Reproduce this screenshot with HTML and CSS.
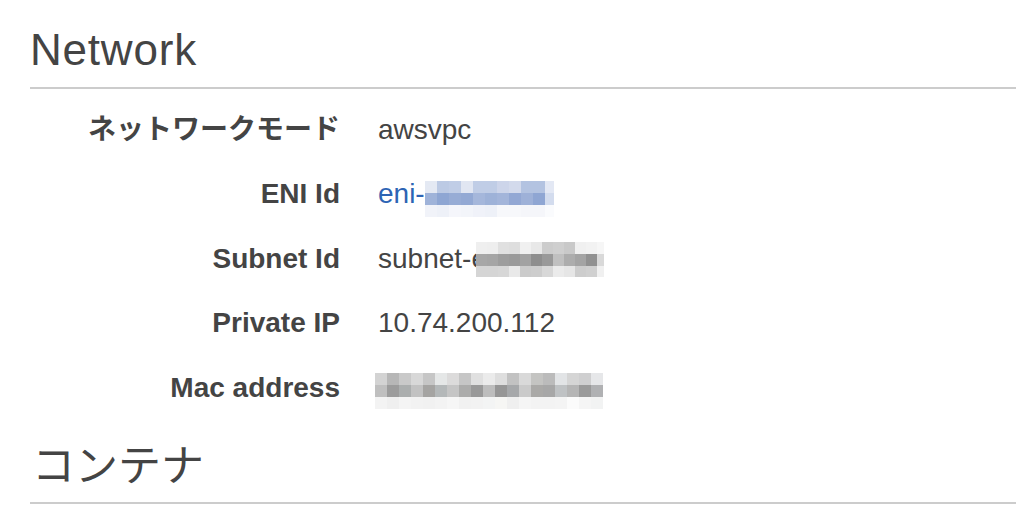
FILE: index.html
```html
<!DOCTYPE html>
<html lang="ja">
<head>
<meta charset="utf-8">
<title>Network</title>
<link rel="stylesheet" href="styles.css">
</head>
<body>
<section class="panel">
  <h2 class="section-title section-title-latin">Network</h2>
  <dl class="props">
    <div class="prop"><dt>ネットワークモード</dt><dd>awsvpc</dd></div>
    <div class="prop"><dt>ENI Id</dt><dd><a class="link" href="#">eni-</a><span class="mosaic mosaic-eni"><span class="mosaic-grid">
      <i style="background:#e4e9f3"></i><i style="background:#bccae4"></i><i style="background:#c0cde6"></i><i style="background:#e1e6f2"></i><i style="background:#c0cde6"></i><i style="background:#c0cde6"></i><i style="background:#cdd5ea"></i><i style="background:#d3daec"></i><i style="background:#b3c3e1"></i><i style="background:#b3c3e1"></i><i style="background:#e3e8f4"></i>
      <i style="background:#9fb3d9"></i><i style="background:#8ea6d3"></i><i style="background:#97acd5"></i><i style="background:#93a9d4"></i><i style="background:#a5b7db"></i><i style="background:#9eb2d8"></i><i style="background:#a3b5da"></i><i style="background:#93a8d4"></i><i style="background:#9eb1d8"></i><i style="background:#8fa6d3"></i><i style="background:#d3dcee"></i>
      <i style="background:#f1f3f9"></i><i style="background:#eef1f8"></i><i style="background:#f5f6fb"></i><i style="background:#f3f5fa"></i><i style="background:#f0f2f9"></i><i style="background:#eef1f8"></i><i style="background:#f7f8fb"></i><i style="background:#f7f8fb"></i><i style="background:#f5f6fa"></i><i style="background:#f5f6fa"></i><i style="background:#fafbfd"></i>
    </span></span></dd></div>
    <div class="prop"><dt>Subnet Id</dt><dd>subnet-e<span class="mosaic mosaic-subnet"><span class="mosaic-grid">
      <i style="background:#efefef"></i><i style="background:#eeeeee"></i><i style="background:#e0e0e0"></i><i style="background:#dedede"></i><i style="background:#f0f0f0"></i><i style="background:#e8e8e8"></i><i style="background:#cccccc"></i><i style="background:#cfcfcf"></i><i style="background:#c9c9c9"></i><i style="background:#f0f0f0"></i><i style="background:#f2f2f2"></i><i style="background:#f6f6f6"></i>
      <i style="background:#a7a7a7"></i><i style="background:#a5a5a5"></i><i style="background:#9d9d9d"></i><i style="background:#9a9a9a"></i><i style="background:#a2a2a2"></i><i style="background:#8e8e8e"></i><i style="background:#999999"></i><i style="background:#c0c0c0"></i><i style="background:#adadad"></i><i style="background:#a4a4a4"></i><i style="background:#919191"></i><i style="background:#d9d9d9"></i>
      <i style="background:#d5d5d5"></i><i style="background:#d5d5d5"></i><i style="background:#d7d7d7"></i><i style="background:#e9e9e9"></i><i style="background:#cbcbcb"></i><i style="background:#cdcdcd"></i><i style="background:#d8d8d8"></i><i style="background:#ebebeb"></i><i style="background:#e6e6e6"></i><i style="background:#cdcdcd"></i><i style="background:#d0d0d0"></i><i style="background:#f0f0f0"></i>
    </span></span></dd></div>
    <div class="prop"><dt>Private IP</dt><dd>10.74.200.112</dd></div>
    <div class="prop"><dt>Mac address</dt><dd><span class="mosaic mosaic-mac"><span class="mosaic-grid">
      <i style="background:#d3d3d3"></i><i style="background:#b7b7b7"></i><i style="background:#c9c9c9"></i><i style="background:#d8d8d8"></i><i style="background:#c6c6c6"></i><i style="background:#e5e7e7"></i><i style="background:#dcdbdb"></i><i style="background:#c6c6c6"></i><i style="background:#e0e0e0"></i><i style="background:#ebebeb"></i><i style="background:#dedede"></i><i style="background:#c2c2c2"></i><i style="background:#d9d9d9"></i><i style="background:#c4c4c2"></i><i style="background:#bbbbbb"></i><i style="background:#e2e4e6"></i><i style="background:#d5d5d5"></i><i style="background:#cfcfd0"></i><i style="background:#e6e7e9"></i>
      <i style="background:#bfbfbf"></i><i style="background:#9c9c9c"></i><i style="background:#abaeae"></i><i style="background:#c2c2c2"></i><i style="background:#a5a4a2"></i><i style="background:#b4b8b9"></i><i style="background:#c5c5c5"></i><i style="background:#acacab"></i><i style="background:#999999"></i><i style="background:#bdbdbd"></i><i style="background:#969696"></i><i style="background:#a6a8aa"></i><i style="background:#cacaca"></i><i style="background:#aaa9a7"></i><i style="background:#a7a7a7"></i><i style="background:#bfc2c4"></i><i style="background:#b5b5b5"></i><i style="background:#9a9a9a"></i><i style="background:#b0b1b3"></i>
      <i style="background:#f3f3f3"></i><i style="background:#efefef"></i><i style="background:#f4f4f4"></i><i style="background:#f2f2f2"></i><i style="background:#f1f1f1"></i><i style="background:#f3f3f3"></i><i style="background:#f6f6f6"></i><i style="background:#f1f1f1"></i><i style="background:#f2f2f2"></i><i style="background:#f3f4f4"></i><i style="background:#f6f6f4"></i><i style="background:#efefef"></i><i style="background:#f5f5f5"></i><i style="background:#f3f3f3"></i><i style="background:#f3f3f3"></i><i style="background:#f4f4f4"></i><i style="background:#fbfbfb"></i><i style="background:#f5f5f5"></i><i style="background:#f2f3f3"></i>
    </span></span></dd></div>
  </dl>
  <h2 class="section-title section-title-next">コンテナ</h2>
</section>
</body>
</html>
```
FILE: styles.css
```css
html, body {
  margin: 0;
  padding: 0;
  background: #ffffff;
}

body {
  font-family: "Liberation Sans", "Noto Sans CJK JP", sans-serif;
  color: #444444;
  overflow: hidden;
}

.panel {
  padding-left: 30px;
}

.section-title {
  margin: 26px 0 0;
  padding-bottom: 13px;
  font-size: 44px;
  line-height: 48px;
  font-weight: normal;
  color: #444444;
  border-bottom: 2px solid #cccccc;
}

.section-title-latin {
  letter-spacing: 0.8px;
}

.section-title-next {
  margin-top: 22px;
  padding-bottom: 12px;
  font-size: 43px;
  padding-left: 2px;
}

.props {
  margin: 9px 0 0;
  padding: 0;
}

.prop {
  display: grid;
  grid-template-columns: 310px 1fr;
  column-gap: 38px;
  font-size: 28px;
  line-height: 64.4px;
  height: 64.4px;
}

.prop dt {
  text-align: right;
  font-weight: bold;
  white-space: nowrap;
}

.prop dd {
  margin: 0;
  white-space: nowrap;
}

.link {
  color: #2d64b4;
  text-decoration: none;
}

.mosaic {
  display: inline-block;
  overflow: hidden;
}

.mosaic-grid {
  display: grid;
}

.mosaic i {
  display: block;
}

.mosaic-eni {
  vertical-align: -14px;
}

.mosaic-eni .mosaic-grid {
  grid-template-columns: repeat(10, 12px) 9px;
  grid-auto-rows: 12px;
}

.mosaic-subnet {
  margin-left: -11px;
  vertical-align: -9px;
}

.mosaic-subnet .mosaic-grid {
  grid-template-columns: repeat(11, 11px) 7px;
  grid-template-rows: 12px 12px 11px;
}

.mosaic-mac {
  margin-left: -3px;
  vertical-align: -12px;
}

.mosaic-mac .mosaic-grid {
  grid-template-columns: repeat(19, 12px);
  grid-auto-rows: 12px;
}
```
